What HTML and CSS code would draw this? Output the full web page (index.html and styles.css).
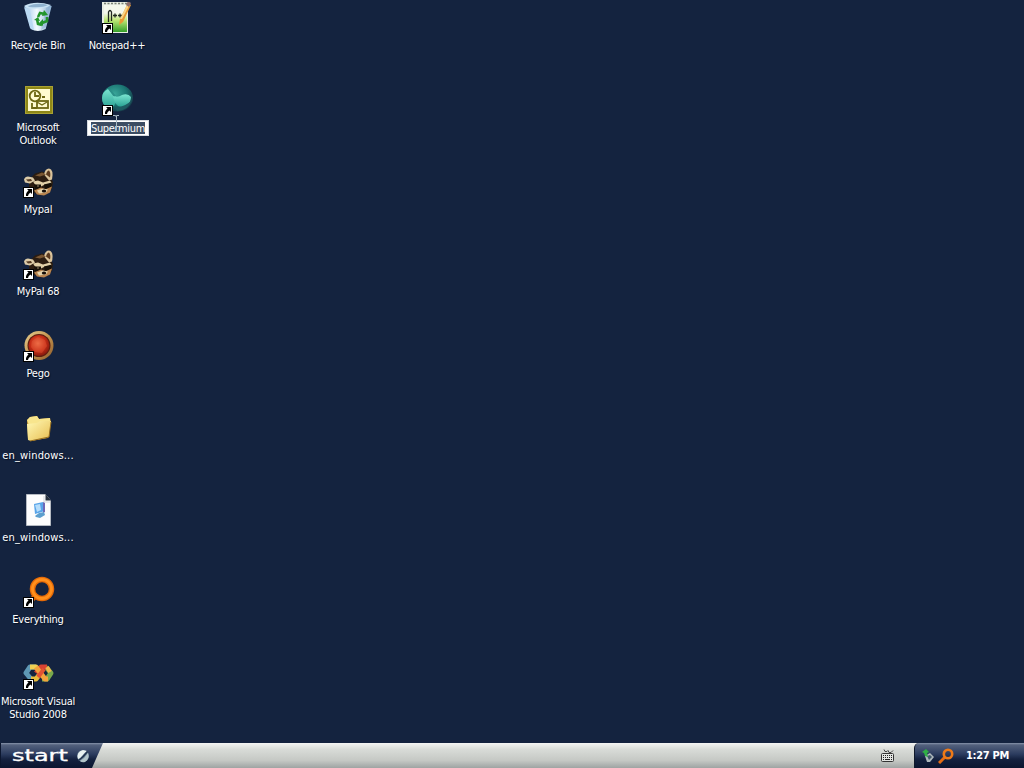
FILE: index.html
```html
<!DOCTYPE html>
<html lang="en">
<head>
    <meta charset="UTF-8">
    <meta name="viewport" content="width=device-width, initial-scale=1.0">
    <title>Desktop</title>
    <link rel="stylesheet" href="styles.css">
</head>
<body>
    <!-- shared shapes -->
    <svg class="defs" width="0" height="0">
        <defs>
            <linearGradient id="bin" x1="0" x2="1"><stop offset="0" stop-color="#9fc6e8"/><stop offset=".45" stop-color="#f2faff"/><stop offset="1" stop-color="#8bb0d2"/></linearGradient>
            <linearGradient id="note" x1="0" y1="0" x2="0" y2="1"><stop offset=".3" stop-color="#f4f8ec"/><stop offset=".55" stop-color="#c0e878"/><stop offset="1" stop-color="#36a02a"/></linearGradient>
            <radialGradient id="teal" cx=".4" cy=".35" r=".65"><stop offset="0" stop-color="#3aa79a"/><stop offset=".6" stop-color="#1b7673"/><stop offset="1" stop-color="#173f4c"/></radialGradient>
            <linearGradient id="wing" x1="0" y1="0" x2="0" y2="1"><stop offset="0" stop-color="#7ae4d0"/><stop offset="1" stop-color="#2aa394"/></linearGradient>
            <radialGradient id="red" cx=".45" cy=".4" r=".6"><stop offset="0" stop-color="#ee7049"/><stop offset=".6" stop-color="#c62c16"/><stop offset="1" stop-color="#8a1b0d"/></radialGradient>
            <linearGradient id="gold" x1="0" y1="0" x2="1" y2="1"><stop offset="0" stop-color="#e6cf92"/><stop offset=".5" stop-color="#c4954f"/><stop offset="1" stop-color="#8d5a2a"/></linearGradient>
            <linearGradient id="folder" x1="0" y1="0" x2="1" y2="1"><stop offset="0" stop-color="#fff8b4"/><stop offset="1" stop-color="#e7bd50"/></linearGradient>
            <symbol id="arrow" viewBox="0 0 11 11">
                <rect width="11" height="11" fill="#000"/>
                <rect x="1" y="1" width="9" height="9" fill="#fff"/>
                <path d="M4 2h5v5L7.500 5.500Q5.200 6.500 5 9H3Q2.600 5.600 5.500 3.500z" fill="#000"/>
            </symbol>
            <symbol id="raccoon" viewBox="0 -1.500 32 32">
                <path d="M6 12L12 6l7-2 5 2 6 8-1 7-4 5-8 2-6-3-5-6z" fill="#2c1d11"/>
                <path d="M21 7q1-6 5-6 5 1 3 11l-3 1z" fill="#d9c29a"/>
                <path d="M23 7q1-4 3-4 2 2 1 7z" fill="#5b3a1f"/>
                <path d="M1 12q1-3 4-3l5 1 2 3-5 3-5-1z" fill="#dccba8"/>
                <path d="M3 12l5-.500 1 2-4 .500z" fill="#543a22"/>
                <path d="M12 8l7-3 4 2-6 2z" fill="#7a5733"/>
                <path d="M10 14l5-1 5 2 7-2 2 3-7 1-4 2-6-2z" fill="#e2d0a8"/>
                <path d="M11 17l7 0 0 4-6 1zM21 17l8-2-1 5-6 2z" fill="#171008"/>
                <path d="M11 23l7-3 4 2 7-3-2 6-6 3-7-1z" fill="#b98550"/>
                <path d="M14 23l6-2 5 1-2 3-7 1z" fill="#e6d3ab"/>
                <ellipse cx="21" cy="23.500" rx="2.200" ry="1.500" fill="#150d08"/>
                <circle cx="15" cy="18.500" r=".7" fill="#c9b48f"/>
            </symbol>
        </defs>
    </svg>

    <main class="desktop">
        <div class="item">
            <svg class="icon" viewBox="0 0 32 32">
                <path d="M1.700 4l6 23q7 4 15 0l6-23q-10-4-27 0z" fill="url(#bin)"/>
                <path d="M1 4Q12-2 28 3L24 5Q12 8 4 6z" fill="#c9e3f5"/>
                <path d="M5 4q10-4 20-1-5 3-19 2z" fill="#8fb2cf"/>
                <path d="M1 5l6 3 4 20-4-2z" fill="#b9d9f2"/>
                <path d="M23 6l4-2-4 21-5 3z" fill="#7fa6c9" opacity=".45"/>
                <g fill="none" stroke="#23952b" stroke-width="2.600"><path d="M15 15l2-4 5 1"/><path d="M24 15v4l-5 2"/><path d="M14 17l1 5 4 1"/></g>
                <path d="M21 8l4 5-6 1zM20 17v7l-4-3zM11 18l4-3 2 4z" fill="#23952b"/>
            </svg>
            <span class="label">Recycle Bin</span>
        </div>
        <div class="item">
            <svg class="icon" viewBox="0 0 32 32">
                <rect x="0" y="0" width="26" height="31" fill="#e9eee4"/>
                <rect x="2" y="3" width="23" height="27" fill="url(#note)"/>
                <path d="M2 1.500h23" stroke="#7d8577" stroke-width="1.500" stroke-dasharray="2 1.500"/>
                <path d="M6.500 20V10q1.500-3 3 0v9M11 13.500h4M13 11.500v4M16 13.500h4M18 11.500v4" stroke="#222a21" stroke-width="1.300" fill="none"/>
                <path d="M26 1l3 2-8 17-4 3 1-6z" fill="#e79a35"/>
                <path d="M26 1l2 1-8 15h-2z" fill="#f8d588"/>
                <path d="M26-1l3 2-2 4-3-2z" fill="#8d6e6c"/>
            </svg>
            <svg class="shortcut"><use href="#arrow"/></svg>
            <span class="label">Notepad++</span>
        </div>
        <div class="item">
            <svg class="icon" viewBox="-1 0 32 32">
                <rect x="1" y="2" width="28" height="28" fill="#8f8817"/>
                <rect x="1.500" y="2.500" width="27" height="27" fill="none" stroke="#aaa232"/>
                <rect x="4" y="5" width="22" height="22" fill="#fffbd0"/>
                <g fill="none" stroke="#6e6813" stroke-width="1.800"><circle cx="11" cy="12" r="5.300"/><path d="M11 8v4h4"/><path d="M8 19v5h5M18 13h3"/><rect x="13" y="17" width="11" height="7"/><path d="M13 18l5 3 5-3" stroke-width="1.300"/></g>
            </svg>
            <span class="label">Microsoft Outlook</span>
        </div>
        <div class="item">
            <svg class="icon" viewBox="0 0 32 32">
                <ellipse cx="15.500" cy="14" rx="15.500" ry="13.500" fill="url(#teal)"/>
                <path d="M0 14q0-6 6-9l6 6 4 3-4 8-7 2q-5-4-5-10z" fill="url(#wing)"/>
                <path d="M6 5l3 1 5 6-2 1z" fill="#2b8f88"/>
                <path d="M11 12q5 2 9-1 6-2 9 2 0 5-4 8-5 3-9 1-4-3-5-10z" fill="url(#wing)"/>
                <path d="M13 23q9 1 17-7-4 11-15 11z" fill="#1d5b62"/>
            </svg>
            <svg class="shortcut"><use href="#arrow"/></svg>
            <span class="label rename"><span class="selected">Supermium</span></span>
            <svg class="caret" viewBox="0 0 8 17"><path d="M1 .5h2.500l.5 1 .5-1H7M4.500 1v15M1 16.500h2.500l.5-1 .5 1H7" fill="none" stroke="#a9b9c4"/></svg>
        </div>
        <div class="item col-one">
            <svg class="icon"><use href="#raccoon"/></svg>
            <svg class="shortcut"><use href="#arrow"/></svg>
            <span class="label">Mypal</span>
        </div>
        <div class="item col-one">
            <svg class="icon"><use href="#raccoon"/></svg>
            <svg class="shortcut"><use href="#arrow"/></svg>
            <span class="label">MyPal 68</span>
        </div>
        <div class="item col-one">
            <svg class="icon" viewBox="0 0 32 32">
                <circle cx="16" cy="15.500" r="14.500" fill="url(#gold)"/>
                <circle cx="16" cy="15.500" r="11.500" fill="#5e1d10"/>
                <circle cx="16" cy="15.500" r="10.500" fill="url(#red)"/>
                <path d="M9 11l6-4 7 3 2 6-5 7-7-1-4-5z" fill="#ec6540" opacity=".35"/>
            </svg>
            <svg class="shortcut"><use href="#arrow"/></svg>
            <span class="label">Pego</span>
        </div>
        <div class="item col-one">
            <svg class="icon" viewBox="0 0 32 32">
                <path d="M4 8l3-3 7-1 2 3 11-1 1 4-3 16-17 3-3-2z" fill="#d5a63e"/>
                <path d="M4 8l3-3 7-1 2 3 11-1v4L6 13z" fill="#f8e58d"/>
                <path d="M4 12l10-1 3-2h11l-2 16-18 4-3-1z" fill="url(#folder)"/>
                <path d="M7 29l19-4 2-15" fill="none" stroke="#966e20"/>
            </svg>
            <span class="label wide">en_windows...</span>
        </div>
        <div class="item col-one">
            <svg class="icon" viewBox="0 0 32 32">
                <path d="M3.500.5h19l5 6v25h-24z" fill="#fdfdfd" stroke="#b5bac2"/>
                <path d="M22.500 0v6.500H28z" fill="#26303e"/>
                <path d="M21 2v6h6" fill="none" stroke="#d2d6db"/>
                <path d="M11 10l9-2 2 9-10 3z" fill="#58a4e9"/>
                <path d="M12 11l5-1 1 6-4 2z" fill="#b5ddfb"/>
                <path d="M20 8l2 1v9l-2 1z" fill="#6f68b6"/>
                <path d="M12 22l4-3 5-1 1 3-5 3-4-1z" fill="#5d9fce"/>
            </svg>
            <span class="label wide">en_windows...</span>
        </div>
        <div class="item col-one">
            <svg class="icon" viewBox="0 0 32 32">
                <path d="M14 18l-8 9" stroke="#df650b" stroke-width="5"/>
                <circle cx="19" cy="13" r="9.500" fill="none" stroke="#e56a07" stroke-width="5.500"/>
                <circle cx="19" cy="13" r="9.500" fill="none" stroke="#ff8f1c" stroke-width="2.800"/>
            </svg>
            <svg class="shortcut"><use href="#arrow"/></svg>
            <span class="label">Everything</span>
        </div>
        <div class="item col-one">
            <svg class="icon" viewBox="0 0 32 32">
                <g fill="none" stroke-width="5" stroke-linejoin="round">
                    <path d="M8 21l-5-6 4-6h6" stroke="#5f98b4"/>
                    <path d="M7 9h6l4 5" stroke="#efd052"/>
                    <path d="M8 21h5l4-5" stroke="#e9bd3d"/>
                    <path d="M23 9l5 6-4 6h-5" stroke="#78a84b"/>
                    <path d="M24 9h-6l-5 6" stroke="#d94331"/>
                    <path d="M13 9l9 12h3" stroke="#f3a33c"/>
                    <path d="M24 9l3 5" stroke="#efb64a" stroke-width="4"/>
                    <path d="M21 11l-6 8" stroke="#e25333" stroke-width="4"/>
                </g>
            </svg>
            <svg class="shortcut"><use href="#arrow"/></svg>
            <span class="label">Microsoft Visual Studio 2008</span>
        </div>
    </main>

    <footer class="taskbar">
        <div class="start">
            <span class="start-text">start</span>
            <svg class="start-logo" viewBox="0 0 14 14">
                <circle cx="7" cy="7" r="6" fill="#6d8496"/>
                <path d="M2 10Q0 3 7 1l4 1Q8 4 6 7t-4 3z" fill="#e9f2f1"/>
                <path d="M4 12Q9 9 12 4q2 6-3 9-3 1-5-1z" fill="#b2c5ca"/>
                <path d="M2.500 11.500Q7 8.500 11.500 2.500" stroke="#20334f" stroke-width="1.500" fill="none"/>
            </svg>
        </div>
        <div class="tasks">
            <svg class="keyboard" viewBox="0 0 15 14">
                <path d="M4 .5l1 2h2l1-1 1 2h2l2-2" fill="none" stroke="#444"/>
                <rect x="1.500" y="4.500" width="12" height="8" rx="1" fill="#e3e5e2" stroke="#333"/>
                <path d="M3 6.500h10M3 8.500h10" stroke="#222" stroke-dasharray="1 1"/>
                <path d="M3 10.500h1M5 10.500h5M11 10.500h1" stroke="#222"/>
            </svg>
        </div>
        <div class="tray">
            <svg class="tray-device" viewBox="0 0 14 14">
                <path d="M4 7l5-3 4 4-4 5H6z" fill="#aeb8bc"/>
                <path d="M6 7l3-1 2 2-3 3z" fill="#42566b"/>
                <path d="M1 3l4-3 3 3-2 1 1 4-3-1-1-3z" fill="#30ae45"/>
            </svg>
            <svg class="tray-search" viewBox="0 0 16 16">
                <path d="M7 9l-6 6" stroke="#e66c13" stroke-width="3"/>
                <circle cx="10" cy="6" r="4.200" fill="none" stroke="#ee7a18" stroke-width="2.600"/>
            </svg>
            <span class="clock">1:27 PM</span>
        </div>
    </footer>
</body>
</html>
```
FILE: styles.css
```css
*{
    padding: 0;
    margin: 0;
    box-sizing: border-box;
}
body{
    width: 1024px;
    height: 768px;
    display: flex;
    flex-direction: column;
    overflow: hidden;
    background: #14233f;
    font-family: "DejaVu Sans Condensed", "DejaVu Sans", sans-serif;
    font-stretch: condensed;
    font-size: 11px;
    color: #fff;
}
.defs{
    position: absolute;
}
.desktop{
    flex: 1;
    display: grid;
    grid-template-columns: 76px 76px;
    grid-auto-rows: 82px;
    column-gap: 3px;
    padding-top: 2px;
    height: 743px;
}
.item{
    position: relative;
    display: flex;
    flex-direction: column;
    align-items: center;
}
.col-one{
    grid-column: 1;
}
.icon{
    display: block;
    width: 32px;
    height: 32px;
    margin-left: 2px;
    overflow: hidden;
}
.shortcut{
    position: absolute;
    left: 23px;
    top: 21px;
    width: 11px;
    height: 11px;
}
.label{
    width: 76px;
    margin-top: 5px;
    line-height: 13px;
    text-align: center;
    letter-spacing: -0.22px;
    text-shadow: 1px 1px 1px #071022;
}
.wide{
    letter-spacing: 0.15px;
}
.rename{
    width: 62px;
    height: 16px;
    margin-top: 4px;
    margin-left: 2px;
    padding: 1px 0;
    background: #fff;
    border: 1px solid #d5dae0;
    letter-spacing: -0.35px;
    text-shadow: none;
    line-height: 13px;
}
.selected{
    display: block;
    width: 54px;
    height: 12px;
    margin: 0 auto;
    background: #3c4d63;
    white-space: nowrap;
}
.caret{
    position: absolute;
    left: 33px;
    top: 31px;
    width: 8px;
    height: 17px;
}
.taskbar{
    height: 25px;
    display: flex;
    background: linear-gradient(#f4f5f3, #d9dcd8 25%, #c5c8c4 70%, #9fa4a3);
}
.start{
    width: 103px;
    display: flex;
    align-items: center;
    padding-left: 11px;
    background: linear-gradient(#8794aa, #53617d 8%, #2b3b5e 45%, #14213f 65%, #0b1630);
    border-left: 1px solid #0c1730;
    clip-path: polygon(0 0, 100% 0, 92px 100%, 0 100%);
}
.start-text{
    width: 58px;
    font-family: "DejaVu Sans", sans-serif;
    font-stretch: normal;
    font-size: 15px;
    line-height: 20px;
    transform: scaleX(1.6);
    transform-origin: left;
    -webkit-text-stroke: 0.3px #fff;
}
.start-logo{
    width: 14px;
    height: 14px;
    margin-left: 6px;
}
.tasks{
    flex: 1;
    display: flex;
    align-items: center;
    justify-content: flex-end;
    padding-right: 19px;
}
.keyboard{
    width: 15px;
    height: 14px;
}
.tray{
    width: 110px;
    display: flex;
    align-items: center;
    padding-left: 6px;
    background: linear-gradient(#8794aa, #53617d 8%, #2b3b5e 45%, #14213f 65%, #0b1630);
    border-left: 1px solid #101a2c;
    border-radius: 5px 0 0 0;
}
.tray-device{
    width: 14px;
    height: 14px;
}
.tray-search{
    width: 16px;
    height: 16px;
    margin-left: 3px;
}
.clock{
    margin-left: 12px;
    font-weight: bold;
    letter-spacing: -0.3px;
}
```
